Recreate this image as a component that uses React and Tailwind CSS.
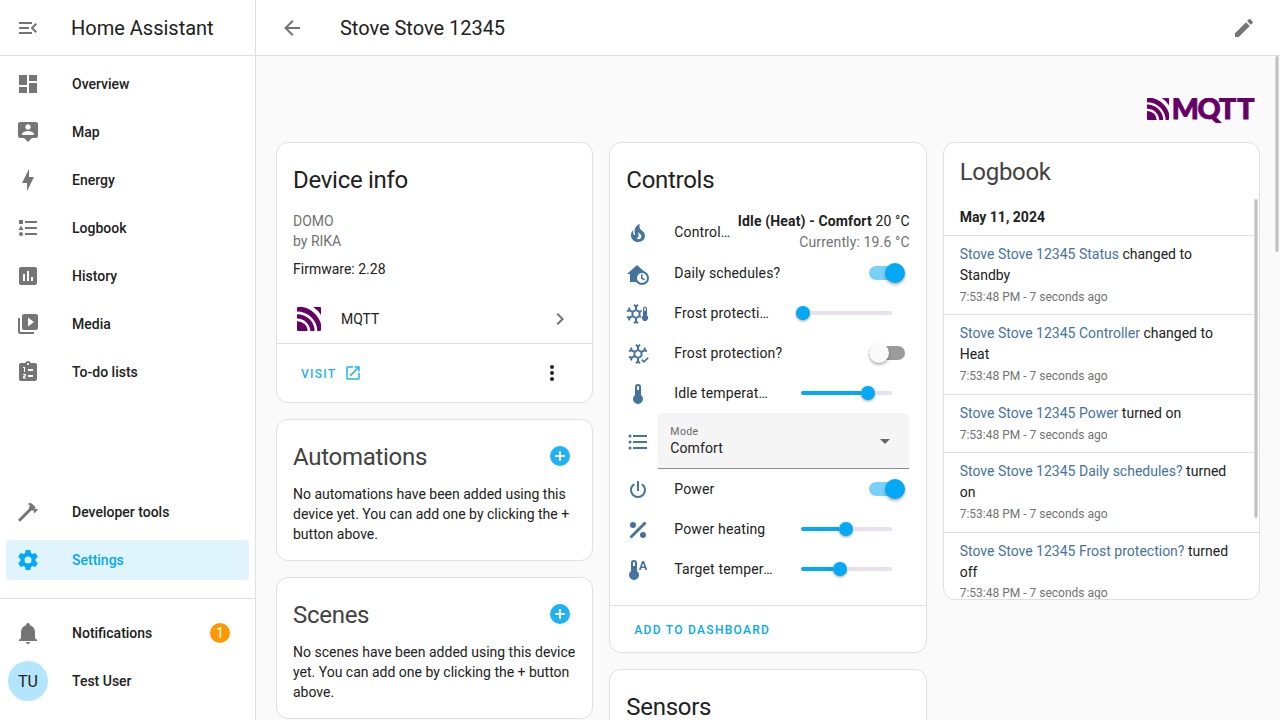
import React from "react";

const paths = {
  menuOpen: "M21,15.61L19.59,17L14.58,12L19.59,7L21,8.39L17.44,12L21,15.61M3,6H16V8H3V6M3,13V11H13V13H3M3,18V16H16V18H3Z",
  dashboard: "M13,3V9H21V3M13,21H21V11H13M3,21H11V15H3M3,13H11V3H3V13Z",
  map: "M20,2H4A2,2 0 0,0 2,4V16A2,2 0 0,0 4,18H8L12,22L16,18H20A2,2 0 0,0 22,16V4A2,2 0 0,0 20,2M12,4.3C13.5,4.3 14.7,5.5 14.7,7C14.7,8.5 13.5,9.7 12,9.7C10.5,9.7 9.3,8.5 9.3,7C9.3,5.5 10.5,4.3 12,4.3M18,15H6V14.1C6,12.1 10,11 12,11C14,11 18,12.1 18,14.1V15Z",
  energy: "M11 15H6L13 1V9H18L11 23V15Z",
  logbook: "M5,9.5L7.5,14H2.5L5,9.5M3,4H7V8H3V4M5,20A2,2 0 0,0 7,18A2,2 0 0,0 5,16A2,2 0 0,0 3,18A2,2 0 0,0 5,20M9,5V7H21V5H9M9,19H21V17H9V19M9,13H21V11H9V13Z",
  history: "M9 17H7V10H9V17M13 17H11V7H13V17M17 17H15V13H17V17M19 3H5C3.9 3 3 3.9 3 5V19C3 20.1 3.9 21 5 21H19C20.1 21 21 20.1 21 19V5C21 3.9 20.1 3 19 3Z",
  media: "M4,6H2V20A2,2 0 0,0 4,22H18V20H4V6M20,2H8A2,2 0 0,0 6,4V16A2,2 0 0,0 8,18H20A2,2 0 0,0 22,16V4A2,2 0 0,0 20,2M12,14.5V5.5L18,10L12,14.5Z",
  todo: "M19 3H14.82C14.4 1.84 13.3 1 12 1S9.6 1.84 9.18 3H5C3.9 3 3 3.9 3 5V19C3 20.1 3.9 21 5 21H19C20.1 21 21 20.1 21 19V5C21 3.9 20.1 3 19 3M12 3C12.55 3 13 3.45 13 4S12.55 5 12 5 11 4.55 11 4 11.45 3 12 3M7 7H9V12H8V8H7V7M7 14H10V16.08L8 17.5H10V18.5H7V16.6L9 15.2V15H7V14M12 9H17V11H12V9M12 15H17V17H12V15Z",
  hammer: "M2,19.63L13.43,8.2L12.72,7.5L14.14,6.07L12,3.89C13.2,2.7 15.09,2.7 16.27,3.89L19.87,7.5L18.45,8.91H21.29L22,9.62L18.45,13.21L17.74,12.5V9.62L16.27,11.04L15.56,10.33L4.13,21.76L2,19.63Z",
  cog: "M12,15.5A3.5,3.5 0 0,1 8.5,12A3.5,3.5 0 0,1 12,8.5A3.5,3.5 0 0,1 15.5,12A3.5,3.5 0 0,1 12,15.5M19.43,12.97C19.47,12.65 19.5,12.33 19.5,12C19.5,11.67 19.47,11.34 19.43,11L21.54,9.37C21.73,9.22 21.78,8.95 21.66,8.73L19.66,5.27C19.54,5.05 19.27,4.96 19.05,5.05L16.56,6.05C16.04,5.66 15.5,5.32 14.87,5.07L14.5,2.42C14.46,2.18 14.25,2 14,2H10C9.75,2 9.54,2.18 9.5,2.42L9.13,5.07C8.5,5.32 7.96,5.66 7.44,6.05L4.95,5.05C4.73,4.96 4.46,5.05 4.34,5.27L2.34,8.73C2.21,8.95 2.27,9.22 2.46,9.37L4.57,11C4.53,11.34 4.5,11.67 4.5,12C4.5,12.33 4.53,12.65 4.57,12.97L2.46,14.63C2.27,14.78 2.21,15.05 2.34,15.27L4.34,18.73C4.46,18.95 4.73,19.03 4.95,18.95L7.44,17.94C7.96,18.34 8.5,18.68 9.13,18.93L9.5,21.58C9.54,21.82 9.75,22 10,22H14C14.25,22 14.46,21.82 14.5,21.58L14.87,18.93C15.5,18.67 16.04,18.34 16.56,17.94L19.05,18.95C19.27,19.03 19.54,18.95 19.66,18.73L21.66,15.27C21.78,15.05 21.73,14.78 21.54,14.63L19.43,12.97Z",
  bell: "M21,19V20H3V19L5,17V11C5,7.9 7.03,5.17 10,4.29C10,4.19 10,4.1 10,4A2,2 0 0,1 12,2A2,2 0 0,1 14,4C14,4.1 14,4.19 14,4.29C16.97,5.17 19,7.9 19,11V17L21,19M14,21A2,2 0 0,1 12,23A2,2 0 0,1 10,21",
  back: "M20,11V13H8L13.5,18.5L12.08,19.92L4.16,12L12.08,4.08L13.5,5.5L8,11H20Z",
  pencil: "M20.71,7.04C21.1,6.65 21.1,6 20.71,5.63L18.37,3.29C18,2.9 17.35,2.9 16.96,3.29L15.12,5.12L18.87,8.87M3,17.25V21H6.75L17.81,9.93L14.06,6.18L3,17.25Z",
  fire: "M17.66 11.2C17.43 10.9 17.15 10.64 16.89 10.38C16.22 9.78 15.46 9.35 14.82 8.72C13.33 7.26 13 4.85 13.95 3C13 3.23 12.17 3.75 11.46 4.32C8.87 6.4 7.85 10.07 9.07 13.22C9.11 13.32 9.15 13.42 9.15 13.55C9.15 13.77 9 13.97 8.8 14.05C8.57 14.15 8.33 14.09 8.14 13.93C8.08 13.88 8.04 13.83 8 13.76C6.87 12.33 6.69 10.28 7.45 8.64C5.78 10 4.87 12.3 5 14.47C5.06 14.97 5.12 15.47 5.29 15.97C5.43 16.57 5.7 17.17 6 17.7C7.08 19.43 8.95 20.67 10.96 20.92C13.1 21.19 15.39 20.8 17.03 19.32C18.86 17.66 19.5 15 18.56 12.72L18.43 12.46C18.22 12 17.66 11.2 17.66 11.2M14.5 17.5C14.22 17.74 13.76 18 13.4 18.1C12.28 18.5 11.16 17.94 10.5 17.28C11.69 17 12.4 16.12 12.61 15.23C12.78 14.43 12.46 13.77 12.33 13C12.21 12.26 12.23 11.63 12.5 10.94C12.69 11.32 12.89 11.7 13.13 12C13.9 13 15.11 13.44 15.37 14.8C15.41 14.94 15.43 15.08 15.43 15.23C15.46 16.05 15.1 16.95 14.5 17.5H14.5Z",
  thermometer: "M15 13V5A3 3 0 0 0 9 5V13A5 5 0 1 0 15 13M12 4A1 1 0 0 1 13 5V8H11V5A1 1 0 0 1 12 4Z",
  list: "M7,5H21V7H7V5M7,13V11H21V13H7M4,4.5A1.5,1.5 0 0,1 5.5,6A1.5,1.5 0 0,1 4,7.5A1.5,1.5 0 0,1 2.5,6A1.5,1.5 0 0,1 4,4.5M4,10.5A1.5,1.5 0 0,1 5.5,12A1.5,1.5 0 0,1 4,13.5A1.5,1.5 0 0,1 2.5,12A1.5,1.5 0 0,1 4,10.5M7,19V17H21V19H7M4,16.5A1.5,1.5 0 0,1 5.5,18A1.5,1.5 0 0,1 4,19.5A1.5,1.5 0 0,1 2.5,18A1.5,1.5 0 0,1 4,16.5Z",
  power: "M16.56,5.44L15.11,6.89C16.84,7.94 18,9.83 18,12A6,6 0 0,1 12,18A6,6 0 0,1 6,12C6,9.83 7.16,7.94 8.88,6.88L7.44,5.44C5.36,6.88 4,9.28 4,12A8,8 0 0,0 12,20A8,8 0 0,0 20,12C20,9.28 18.64,6.88 16.56,5.44M13,3H11V13H13",
  percent: "M18.5,3.5L3.5,18.5L5.5,20.5L20.5,5.5M7,4A3,3 0 0,0 4,7A3,3 0 0,0 7,10A3,3 0 0,0 10,7A3,3 0 0,0 7,4M17,14A3,3 0 0,0 14,17A3,3 0 0,0 17,20A3,3 0 0,0 20,17A3,3 0 0,0 17,14Z",
  chevron: "M8.59,16.58L13.17,12L8.59,7.41L10,6L16,12L10,18L8.59,16.58Z",
  open: "M14,3V5H17.59L7.76,14.83L9.17,16.24L19,6.41V10H21V3M19,19H5V5H12V3H5C3.89,3 3,3.9 3,5V19A2,2 0 0,0 5,21H19A2,2 0 0,0 21,19V12H19V19Z",
  dots: "M12,16A2,2 0 0,1 14,18A2,2 0 0,1 12,20A2,2 0 0,1 10,18A2,2 0 0,1 12,16M12,10A2,2 0 0,1 14,12A2,2 0 0,1 12,14A2,2 0 0,1 10,12A2,2 0 0,1 12,10M12,4A2,2 0 0,1 14,6A2,2 0 0,1 12,8A2,2 0 0,1 10,6A2,2 0 0,1 12,4Z",
  plus: "M17,13H13V17H11V13H7V11H11V7H13V11H17M12,2A10,10 0 0,0 2,12A10,10 0 0,0 12,22A10,10 0 0,0 22,12A10,10 0 0,0 12,2Z",
  drop: "M7,10L12,15L17,10H7Z",
  flake: "M16.46,13.44V10.56L18.46,9.43L20.79,10.05L21.31,8.12L19.54,7.65L20,5.88L18.07,5.36L17.45,7.69L15.45,8.82L13,7.38V5.12L14.71,3.41L13.29,2L12,3.29L10.71,2L9.29,3.41L11,5.12V7.38L8.5,8.82L6.5,7.69L5.92,5.36L4,5.88L4.47,7.65L2.7,8.12L3.22,10.05L5.55,9.43L7.55,10.56V13.45L5.55,14.58L3.22,13.96L2.7,15.89L4.47,16.36L4,18.12L5.93,18.64L6.55,16.31L8.55,15.18L11,16.62V18.88L9.29,20.59L10.71,22L12,20.71L13.29,22L14.7,20.59L13,18.88V16.62L15.5,15.17L16.46,13.44M9.5,10.56L12,9.11L14.5,10.56V13.44L12,14.89L9.5,13.44V10.56Z",
  flakeLeft: "M14.46,13.44V10.56L15.6,9.9V7.6L15.2,7.9L13.45,8.82L11,7.38V5.12L12.71,3.41L11.29,2L10,3.29L8.71,2L7.29,3.41L9,5.12V7.38L6.5,8.82L4.5,7.69L3.92,5.36L2,5.88L2.47,7.65L0.7,8.12L1.22,10.05L3.55,9.43L5.55,10.56V13.45L3.55,14.58L1.22,13.96L0.7,15.89L2.47,16.36L2,18.12L3.93,18.64L4.55,16.31L6.55,15.18L9,16.62V18.88L7.29,20.59L8.71,22L10,20.71L11.29,22L12.7,20.59L11,18.88V16.62L13.5,15.17L14.9,16V13.7L14.46,13.44M7.5,10.56L10,9.11L12.5,10.56V13.44L10,14.89L7.5,13.44V10.56Z",
};

function Icon({ name, className = "" }) {
  return (
    <svg viewBox="0 0 24 24" className={`size-6 shrink-0 ${className}`}>
      <path d={paths[name]} fill="currentColor" fillRule="evenodd" />
    </svg>
  );
}

function HomeClock() {
  return (
    <svg viewBox="0 0 24 24" className="size-6 shrink-0">
      <path d="M11 3L1 12H4V20H17V12H21Z" fill="currentColor" />
      <circle cx="16" cy="16" r="6" fill="#fff" stroke="currentColor" strokeWidth="2" />
      <path d="M15.75 12.2V16.2L18.6 17.9" fill="none" stroke="currentColor" strokeWidth="1.5" />
    </svg>
  );
}

function FlakeThermometer() {
  return (
    <svg viewBox="0 0 24 24" className="size-6 shrink-0">
      <g fill="currentColor" fillRule="evenodd">
        <path d={paths.flakeLeft} />
        <path d="M21 13.4V6.5A2 2 0 0 0 17 6.5V13.4A3.1 3.1 0 1 0 21 13.4M19 5.5A0.8 0.8 0 0 1 19.7 6.3V9H18.3V6.3A0.8 0.8 0 0 1 19 5.5Z" />
      </g>
    </svg>
  );
}

function FlakeCheck() {
  return (
    <svg viewBox="0 0 24 24" className="size-6 shrink-0">
      <path d={paths.flake} fill="currentColor" fillRule="evenodd" />
      <path d="M15.7 17.6L18 19.9L22.2 15.7" fill="none" stroke="currentColor" strokeWidth="1.7" />
    </svg>
  );
}

function ThermometerAuto() {
  return (
    <svg viewBox="0 0 24 24" className="size-6 shrink-0">
      <g fill="currentColor" fillRule="evenodd">
        <path d="M11 13V5A3 3 0 0 0 5 5V13A5 5 0 1 0 11 13M8 4A1 1 0 0 1 9 5V8H7V5A1 1 0 0 1 8 4Z" />
        <path d="M16.1 3H18.1L21.3 12H19.4L18.7 10H15.5L14.8 12H12.9L16.1 3M15.95 8.6H18.25L17.1 5.1Z" />
      </g>
    </svg>
  );
}

function MqttMark({ className }) {
  return (
    <svg viewBox="0 0 24 24" className={className} fill="#660066">
      <path d="M0 14.2A10.3 9.8 0 0 1 10.6 24H1A1 1 0 0 1 0 23Z" />
      <path d="M0 7.2A17.6 16.8 0 0 1 17.6 24H13.3A13.3 12.8 0 0 0 0 11.6Z" />
      <path d="M0 1A1 1 0 0 1 1 0H5.5A24 24 0 0 1 24 17V23A1 1 0 0 1 23 24H20.3A20.3 19.6 0 0 0 0 4.6Z" />
      <path d="M16.2 0H23A1 1 0 0 1 24 1V8A27 27 0 0 0 16.2 0Z" />
    </svg>
  );
}

function NavItem({ icon, label, active }) {
  return (
    <div className={`flex h-10 items-center gap-8 rounded pl-[10px] text-sm font-medium ${active ? "bg-[#e0f4fd] text-[#03a9f4]" : "text-[#212121]"}`}>
      <Icon name={icon} className={active ? "" : "text-[#757575]"} />
      <span>{label}</span>
    </div>
  );
}

function Sidebar() {
  return (
    <aside className="flex w-64 shrink-0 flex-col border-r border-[#e0e0e0] bg-white">
      <div className="flex h-14 shrink-0 items-center gap-[31px] border-b border-[#e0e0e0] pl-4">
        <Icon name="menuOpen" className="text-[#757575]" />
        <span className="text-xl">Home Assistant</span>
      </div>
      <nav className="flex flex-col gap-2 px-1.5 pt-2">
        <NavItem icon="dashboard" label="Overview" />
        <NavItem icon="map" label="Map" />
        <NavItem icon="energy" label="Energy" />
        <NavItem icon="logbook" label="Logbook" />
        <NavItem icon="history" label="History" />
        <NavItem icon="media" label="Media" />
        <NavItem icon="todo" label="To-do lists" />
      </nav>
      <nav className="mt-auto flex flex-col gap-2 px-1.5 pb-[18px]">
        <NavItem icon="hammer" label="Developer tools" />
        <NavItem icon="cog" label="Settings" active />
      </nav>
      <div className="flex h-[122px] shrink-0 flex-col gap-2 border-t border-[#e0e0e0] pt-[14px] text-sm font-medium">
        <div className="flex h-10 items-center pr-[25px] pl-4">
          <Icon name="bell" className="mr-8 text-[#757575]" />
          <span className="flex-1">Notifications</span>
          <span className="flex size-5 items-center justify-center rounded-full bg-[#ff9800] font-normal text-white">1</span>
        </div>
        <div className="flex h-10 items-center gap-6 pl-2">
          <span className="flex size-10 items-center justify-center rounded-full bg-[#b3e5fc] pt-px text-base font-normal">TU</span>
          <span>Test User</span>
        </div>
      </div>
    </aside>
  );
}

function Card({ className = "", children }) {
  return <section className={`flex flex-col rounded-xl border border-[#e0e0e0] bg-white ${className}`}>{children}</section>;
}

function EmptyCard({ title, text }) {
  return (
    <Card className="h-[142px] px-4 pt-3">
      <div className="mb-1 flex h-12 items-center justify-between pr-1">
        <h2 className="pt-0.5 text-2xl tracking-[-0.288px] text-[#424242]">{title}</h2>
        <Icon name="plus" className="text-[#20b2f6]" />
      </div>
      <p className="text-sm leading-5">{text}</p>
    </Card>
  );
}

function Switch({ on }) {
  return (
    <div className={`mr-1 flex h-3.5 w-9 items-center rounded-full ${on ? "justify-end bg-[#79d0f9]" : "bg-[#9b9b9b]"}`}>
      <span className={`size-5 shrink-0 rounded-full shadow-[0_2px_3px_rgba(0,0,0,0.3)] ${on ? "bg-[#03a9f4]" : "bg-[#fafafa]"}`} />
    </div>
  );
}

function Slider({ value }) {
  return (
    <div className="mr-[17px] flex h-5 w-[91px] items-center">
      <div className="h-1 rounded-l-full bg-[#03a9f4]" style={{ width: Math.max(0, value - 7) }} />
      <span className={`size-3.5 shrink-0 rounded-full bg-[#03a9f4] shadow-[0_1px_3px_rgba(0,0,0,0.4)] ${value < 7 ? "-ml-[5px]" : ""}`} />
      <div className="h-1 flex-1 rounded-r-full bg-[#e7e0ec]" />
    </div>
  );
}

function Row({ icon, name, nameClass = "flex-1", tall, children }) {
  return (
    <div className={`flex shrink-0 items-center text-sm tracking-[0.14px] ${tall ? "h-[42px]" : "h-10"}`}>
      <span className="mr-6 pt-0.5 text-[#44739e]">{icon}</span>
      <span className={`min-w-0 truncate ${nameClass}`}>{name}</span>
      {children}
    </div>
  );
}

function Controls() {
  return (
    <Card className="h-[511px]">
      <h2 className="flex h-[68px] items-center px-4 pt-[6px] text-2xl tracking-[-0.288px]">Controls</h2>
      <div className="flex h-[394px] flex-col pr-[17px] pl-4">
        <Row tall icon={<Icon name="fire" />} name="Controller">
          <div className="-mr-px ml-1.5 shrink-0 text-right leading-[21px]">
            <div>
              <b className="font-bold">Idle (Heat) - Comfort</b> 20 °C
            </div>
            <div className="text-[#727272]">Currently: 19.6 °C</div>
          </div>
        </Row>
        <Row icon={<HomeClock />} name="Daily schedules?"><Switch on /></Row>
        <Row icon={<FlakeThermometer />} name="Frost protection temperature" nameClass="w-[100px] mr-auto"><Slider value={2} /></Row>
        <Row icon={<FlakeCheck />} name="Frost protection?"><Switch /></Row>
        <Row icon={<Icon name="thermometer" />} name="Idle temperature" nameClass="w-[100px] mr-auto"><Slider value={67} /></Row>
        <div className="flex h-14 shrink-0 items-center gap-2">
          <Icon name="list" className="mt-0.5 text-[#44739e]" />
          <div className="flex h-14 flex-1 items-center justify-between rounded-t border-b border-[#8b8b8b] bg-[#f5f5f5] pr-3 pl-3">
            <div className="flex flex-col pt-px">
              <span className="text-[10.5px] leading-[14px] tracking-[0.4px] text-[#6a6a6a]">Mode</span>
              <span className="text-sm leading-[19px] tracking-[0.1px]">Comfort</span>
            </div>
            <Icon name="drop" className="text-[#666]" />
          </div>
        </div>
        <Row icon={<Icon name="power" />} name="Power"><Switch on /></Row>
        <Row icon={<Icon name="percent" />} name="Power heating"><Slider value={45} /></Row>
        <Row icon={<ThermometerAuto />} name="Target temperature" nameClass="w-[100px] mr-auto"><Slider value={39} /></Row>
      </div>
      <div className="flex flex-1 items-center border-t border-[#e0e0e0] pt-0.5 pl-6 text-xs font-medium tracking-[1.29px] text-[#03a9f4]">ADD TO DASHBOARD</div>
    </Card>
  );
}

function DeviceInfo() {
  return (
    <Card className="h-[261px]">
      <h2 className="flex h-[68px] items-center px-4 pt-[6px] text-2xl tracking-[-0.288px]">Device info</h2>
      <div className="px-4 text-sm leading-5">
        <div className="text-[#727272]">DOMO</div>
        <div className="text-[#727272]">by RIKA</div>
        <div className="mt-2">Firmware: 2.28</div>
      </div>
      <div className="mt-4 flex h-12 items-center pr-5 pl-5 text-sm">
        <MqttMark className="size-6" />
        <span className="ml-5 flex-1">MQTT</span>
        <Icon name="chevron" className="text-[#727272]" />
      </div>
      <div className="flex flex-1 items-center border-t border-[#e0e0e0] pr-7 pl-6 text-[#20b2f6]">
        <span className="pt-0.5 text-xs font-medium tracking-[1.25px]">VISIT</span>
        <svg viewBox="0 0 24 24" className="ml-2 size-[18px]"><path d={paths.open} fill="currentColor" /></svg>
        <Icon name="dots" className="ml-auto text-[#212121]" />
      </div>
    </Card>
  );
}

const entries = [
  ["Status", "changed to Standby"],
  ["Controller", "changed to Heat"],
  ["Power", "turned on"],
  ["Daily schedules?", "turned on"],
  ["Frost protection?", "turned off"],
];

function Logbook() {
  return (
    <Card className="relative h-[458px] overflow-hidden">
      <h2 className="flex h-14 shrink-0 items-center px-4 pt-[1px] text-2xl tracking-[-0.288px] text-[#424242]">Logbook</h2>
      <div className="flex h-9 shrink-0 items-center px-4 text-sm font-bold">May 11, 2024</div>
      {entries.map(([name, text]) => (
        <div key={name} className="shrink-0 border-t border-[#e0e0e0] px-4 py-2 text-sm leading-[21px]">
          <div>
            <span className="text-[#44739e]">Stove Stove 12345 {name}</span> {text}
          </div>
          <div className="-mb-[0.8px] pt-[0.8px] text-xs leading-[20.4px] text-[#727272]">7:53:48 PM - 7 seconds ago</div>
        </div>
      ))}
      <div className="absolute top-[56px] right-px h-[319px] w-1 rounded-full border-x border-[#d9d9d9] bg-[#c1c1c1]" />
    </Card>
  );
}

export default function App() {
  return (
    <div className="flex h-[720px] w-[1280px] overflow-hidden bg-[#fafafa] font-['Roboto',sans-serif] text-[#212121]">
      <Sidebar />
      <main className="relative flex flex-1 flex-col">
        <header className="flex h-14 shrink-0 items-center border-b border-[#e0e0e0] bg-white pr-6 pl-6">
          <Icon name="back" className="text-[#757575]" />
          <h1 className="ml-9 flex-1 text-xl tracking-[-0.02px]">Stove Stove 12345</h1>
          <Icon name="pencil" className="text-[#757575]" />
        </header>
        <div className="flex h-[86px] shrink-0 items-start justify-end gap-1 pt-[42px] pr-6">
          <MqttMark className="size-[22px]" />
          <svg viewBox="0 0 83 30" className="h-[30px] w-[83px]">
            <text y="21.4" fill="#660066" stroke="#660066" strokeWidth="0.9" fontFamily="Lato" fontWeight="900" fontSize="28.5" x="-1.2 24.4 46 64.3">MQTT</text>
          </svg>
        </div>
        <div className="grid grid-cols-3 items-start gap-4 px-5">
          <div className="flex flex-col gap-4">
            <DeviceInfo />
            <EmptyCard title="Automations" text="No automations have been added using this device yet. You can add one by clicking the + button above." />
            <EmptyCard title="Scenes" text="No scenes have been added using this device yet. You can add one by clicking the + button above." />
          </div>
          <div className="flex flex-col gap-4">
            <Controls />
            <Card className="h-[142px]">
              <h2 className="flex h-[68px] items-center px-4 pt-[6px] text-2xl tracking-[-0.288px]">Sensors</h2>
            </Card>
          </div>
          <Logbook />
        </div>
        <div className="absolute top-14 right-px h-[196px] w-1 rounded-full border-x border-[#d9d9d9] bg-[#c1c1c1]" />
      </main>
    </div>
  );
}
